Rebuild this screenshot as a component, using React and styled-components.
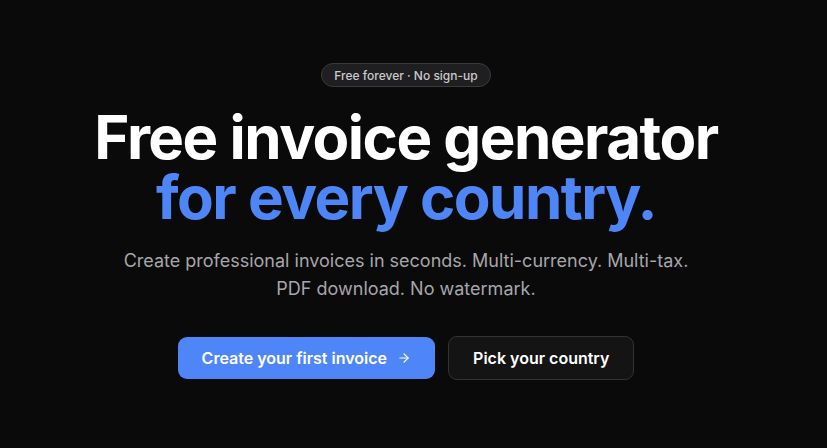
import React from "react";
import styled, { createGlobalStyle } from "styled-components";
import { ArrowRight } from "lucide-react";

const Global = createGlobalStyle`
  html, body { margin: 0; padding: 0; background: #0a0a0a; }
  body { font-family: Inter, "Noto Sans", sans-serif; -webkit-font-smoothing: antialiased; }
`;

const Page = styled.main`
  min-height: 448px;
  box-sizing: border-box;
  padding: 63px 15px 0 0;
  display: flex;
  flex-direction: column;
  align-items: center;
  background: #0a0a0a;
`;

const Badge = styled.div`
  height: 24px;
  box-sizing: border-box;
  padding: 0 12px;
  display: flex;
  align-items: center;
  border-radius: 999px;
  border: 1px solid #3a3a3d;
  background: #1f1f21;
  color: #c9c9cc;
  font-size: 12px;
  font-weight: 500;
`;

const Title = styled.h1`
  margin: 20px 0 0;
  text-align: center;
  font-size: 60px;
  line-height: 60px;
  font-weight: 700;
  letter-spacing: -0.025em;
  color: #ffffff;
`;

const Accent = styled.span`
  display: block;
  color: #4f86f7;
`;

const Sub = styled.p`
  margin: 20px 0 0;
  max-width: 600px;
  text-align: center;
  font-size: 18px;
  line-height: 28px;
  color: #a6a6ab;
`;

const Actions = styled.div`
  margin-top: 33px;
  display: flex;
  align-items: center;
  gap: 13px;
`;

const Button = styled.a`
  display: inline-flex;
  align-items: center;
  gap: 10px;
  box-sizing: border-box;
  height: ${(p) => (p.$primary ? "42px" : "44px")};
  padding: 0 24px;
  border-radius: 9px;
  font-size: 16px;
  font-weight: 600;
  color: #ffffff;
  text-decoration: none;
  background: ${(p) => (p.$primary ? "#4f86f7" : "#141415")};
  border: ${(p) => (p.$primary ? "none" : "1px solid #333336")};
`;

export default function App() {
  return (
    <>
      <Global />
      <Page>
        <Badge>Free forever · No sign-up</Badge>
        <Title>
          Free invoice generator
          <Accent>for every country.</Accent>
        </Title>
        <Sub>
          Create professional invoices in seconds. Multi-currency. Multi-tax.
          <br />
          PDF download. No watermark.
        </Sub>
        <Actions>
          <Button $primary href="#">
            Create your first invoice
            <ArrowRight size={14} strokeWidth={2} />
          </Button>
          <Button href="#">Pick your country</Button>
        </Actions>
      </Page>
    </>
  );
}
